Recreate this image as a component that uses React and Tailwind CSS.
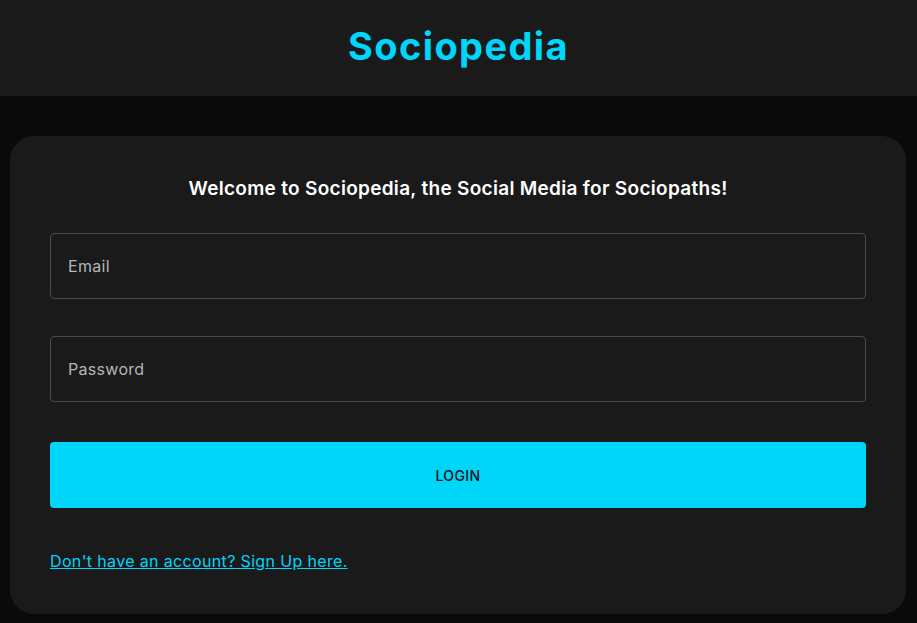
export default function App() {
  const font = { fontFamily: "Inter, 'Noto Sans', sans-serif" };
  return (
    <div className="min-h-[623px] w-full bg-[#0a0a0a]" style={font}>
      <header className="h-[96px] bg-[#1a1a1a] flex items-center justify-center pb-[5px]">
        <h1 className="text-[38px] font-bold text-[#00d5fa] tracking-[1.4px] leading-none">Sociopedia</h1>
      </header>
      <div className="pt-[40px] px-[10px] pr-[11px]">
        <div className="bg-[#1a1a1a] rounded-[24px] px-[40px] pt-[40px] pb-[41px]">
          <h2 className="text-center text-white text-[19px] font-semibold leading-[26px] tracking-[0.3px]">
            Welcome to Sociopedia, the Social Media for Sociopaths!
          </h2>
          <div className="mt-[31px] flex flex-col">
            <div className="h-[66px] border border-[#4b4b4b] rounded-[4px] flex items-center px-[17px]">
              <span className="text-[16px] text-[#b5b5b5] tracking-[0.3px]">Email</span>
            </div>
            <div className="mt-[37px] h-[66px] border border-[#4b4b4b] rounded-[4px] flex items-center px-[17px]">
              <span className="text-[16px] text-[#b5b5b5] tracking-[0.3px]">Password</span>
            </div>
            <button className="mt-[40px] h-[66px] rounded-[4px] bg-[#00d5fa] flex items-center justify-center text-[14px] font-medium text-[#141414] tracking-[0.4px]">
              LOGIN
            </button>
            <div className="mt-[41px] leading-[24px]">
              <a className="text-[#00d5fa] underline text-[16px] tracking-[0.35px] cursor-pointer">Don't have an account? Sign Up here.</a>
            </div>
          </div>
        </div>
      </div>
    </div>
  );
}
